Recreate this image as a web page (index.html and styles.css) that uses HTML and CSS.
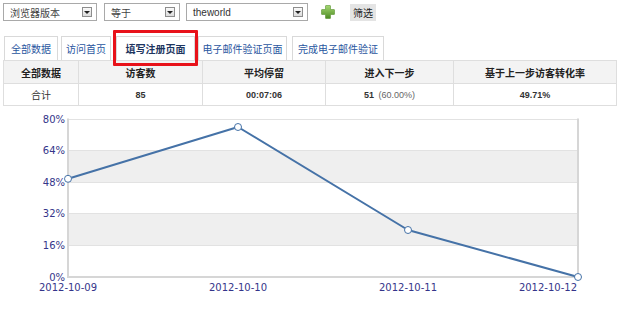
FILE: index.html
```html
<!DOCTYPE html>
<html>
<head>
<meta charset="utf-8">
<link rel="stylesheet" href="styles.css">
</head>
<body>
<div class="toolbar">
  <div class="select s1"><span class="val">浏览器版本</span><span class="arrow"></span></div>
  <div class="select s2"><span class="val">等于</span><span class="arrow"></span></div>
  <div class="select s3"><span class="val latin">theworld</span><span class="arrow"></span></div>
  <svg class="plus" width="14" height="14" viewBox="0 0 14 14">
    <defs>
      <linearGradient id="pg" x1="0" y1="0" x2="0" y2="1">
        <stop offset="0" stop-color="#a5d872"/>
        <stop offset="1" stop-color="#4c8a22"/>
      </linearGradient>
    </defs>
    <path d="M5 0.5h4a0.5 0.5 0 0 1 0.5 0.5v3.5h3.5a0.5 0.5 0 0 1 0.5 0.5v4a0.5 0.5 0 0 1 -0.5 0.5h-3.5v3.5a0.5 0.5 0 0 1 -0.5 0.5h-4a0.5 0.5 0 0 1 -0.5 -0.5v-3.5h-3.5a0.5 0.5 0 0 1 -0.5 -0.5v-4a0.5 0.5 0 0 1 0.5 -0.5h3.5v-3.5a0.5 0.5 0 0 1 0.5 -0.5z" fill="url(#pg)" stroke="#5a9330" stroke-width="0.6"/>
  </svg>
  <button class="btn">筛选</button>
</div>

<div class="tabs">
  <div class="tab t1">全部数据</div>
  <div class="tab t2">访问首页</div>
  <div class="tab t3 active">填写注册页面</div>
  <div class="tab t4">电子邮件验证页面</div>
  <div class="tab t5">完成电子邮件验证</div>
</div>

<table class="stats">
  <tr class="head">
    <th class="c1">全部数据</th>
    <th class="c2">访客数</th>
    <th class="c3">平均停留</th>
    <th class="c4">进入下一步</th>
    <th class="c5">基于上一步访客转化率</th>
  </tr>
  <tr class="row">
    <td class="cn">合计</td>
    <td class="num">85</td>
    <td class="num">00:07:06</td>
    <td class="num">51 <span class="pct">(60.00%)</span></td>
    <td class="num">49.71%</td>
  </tr>
</table>

<svg class="chart" width="620" height="205" viewBox="0 0 620 205">
  <rect x="68" y="44.6" width="510" height="31.6" fill="#efefef"/>
  <rect x="68" y="107.8" width="510" height="31.6" fill="#efefef"/>
  <g stroke="#e2e2e2" stroke-width="1">
    <line x1="68" y1="13.5" x2="578" y2="13.5"/>
    <line x1="68" y1="44.5" x2="578" y2="44.5"/>
    <line x1="68" y1="76.5" x2="578" y2="76.5"/>
    <line x1="68" y1="107.5" x2="578" y2="107.5"/>
    <line x1="68" y1="139.5" x2="578" y2="139.5"/>
  </g>
  <g stroke="#d6d6d6" stroke-width="2">
    <line x1="68" y1="12.5" x2="68" y2="172"/>
    <line x1="578" y1="12.5" x2="578" y2="172"/>
    <line x1="67" y1="171" x2="579" y2="171"/>
  </g>
  <g class="ylab" text-anchor="end">
    <text x="65" y="17">80%</text>
    <text x="65" y="48">64%</text>
    <text x="65" y="80">48%</text>
    <text x="65" y="111">32%</text>
    <text x="65" y="143">16%</text>
    <text x="65" y="175">0%</text>
  </g>
  <g class="xlab" text-anchor="middle">
    <text x="68" y="185">2012-10-09</text>
    <text x="238" y="185">2012-10-10</text>
    <text x="408" y="185">2012-10-11</text>
    <text x="577" y="185" text-anchor="end">2012-10-12</text>
  </g>
  <polyline points="68,72.8 238,21 408,124 578,171" fill="none" stroke="#4572a7" stroke-width="2" stroke-linejoin="round"/>
  <g fill="#fff" stroke="#4572a7" stroke-width="1">
    <circle cx="68" cy="72.8" r="3.5"/>
    <circle cx="238" cy="21" r="3.5"/>
    <circle cx="408" cy="124" r="3.5"/>
    <circle cx="578" cy="171" r="3.5"/>
  </g>
</svg>
</body>
</html>
```

FILE: styles.css
```css
html, body {
  margin: 0;
  padding: 0;
  background: #fff;
}
body {
  width: 620px;
  height: 310px;
  overflow: hidden;
  font-family: "Liberation Sans", "Noto Sans CJK SC", sans-serif;
  font-size: 10px;
  color: #333;
}

.toolbar {
  display: flex;
  align-items: center;
  height: 18px;
  padding: 3px 0 0 3px;
}
.select {
  position: relative;
  box-sizing: border-box;
  height: 18px;
  border: 1px solid #a9a9a9;
  background: #fff;
  display: flex;
  align-items: center;
  padding-left: 6px;
  color: #444;
  font-family: "Noto Sans CJK SC", sans-serif;
  font-size: 10px;
}
.select .val.latin {
  font-family: "Liberation Sans", sans-serif;
  font-size: 10px;
  color: #333;
}
.s1 { width: 94px; }
.s2 { width: 76px; margin-left: 7px; }
.s3 { width: 122px; margin-left: 6px; }
.arrow {
  position: absolute;
  right: 4px;
  top: 3px;
  box-sizing: border-box;
  width: 10px;
  height: 10px;
  border: 1px solid #8d8d8d;
  background: linear-gradient(#fafafa, #dcdcdc);
}
.arrow::after {
  content: "";
  position: absolute;
  left: 1px;
  top: 3px;
  border-left: 3px solid transparent;
  border-right: 3px solid transparent;
  border-top: 3px solid #222;
}
.plus {
  margin-left: 13px;
  display: block;
}
.btn {
  margin-left: 15px;
  height: 17px;
  padding: 0 3px;
  border: 0;
  background: #e4e4e4;
  color: #222;
  font-family: "Noto Sans CJK SC", sans-serif;
  font-size: 10px;
  line-height: 17px;
}

.tabs {
  display: flex;
  align-items: flex-end;
  margin-top: 15px;
  padding-left: 4px;
  height: 24px;
}
.tab {
  position: relative;
  box-sizing: border-box;
  height: 24px;
  border: 1px solid #d9d9d9;
  border-bottom: 0;
  background: #fff;
  color: #2a56a0;
  font-family: "Noto Sans CJK SC", sans-serif;
  font-size: 10px;
  line-height: 23px;
  text-align: center;
  white-space: nowrap;
}
.t1 { width: 54px; }
.t2 { width: 50px; margin-left: 3px; }
.t3 { width: 79px; margin-left: 5px; }
.t4 { width: 89px; margin-left: 3px; }
.t5 { width: 92px; margin-left: 5px; }
.tab.active {
  color: #1d355f;
  font-weight: bold;
}
.tab.active::after {
  content: "";
  position: absolute;
  left: -4px;
  right: -4px;
  top: -7px;
  bottom: -6px;
  border: 3px solid #e8121a;
  border-radius: 1px;
}

.stats {
  margin-left: 3px;
  width: 614px;
  border-collapse: collapse;
  border: 1px solid #dedede;
}
.stats th, .stats td {
  border: 1px solid #dedede;
  text-align: center;
  padding: 0;
  font-weight: bold;
}
.stats .head th {
  height: 22px;
  background: #f3f3f3;
  color: #222;
  font-family: "Noto Sans CJK SC", sans-serif;
  font-size: 10px;
}
.stats .row td {
  height: 21px;
  background: #fff;
  color: #333;
  font-size: 9px;
}
.stats td.cn {
  font-family: "Noto Sans CJK SC", sans-serif;
  font-size: 10px;
  font-weight: normal;
}
.stats .pct {
  font-weight: normal;
  color: #666;
  margin-left: 2px;
}
.c1 { width: 74px; }
.c2 { width: 123px; }
.c3 { width: 122px; }
.c4 { width: 127px; }

.chart {
  display: block;
}
.chart text {
  font-family: "DejaVu Sans", sans-serif;
  font-size: 10px;
  fill: #35358a;
}
```
